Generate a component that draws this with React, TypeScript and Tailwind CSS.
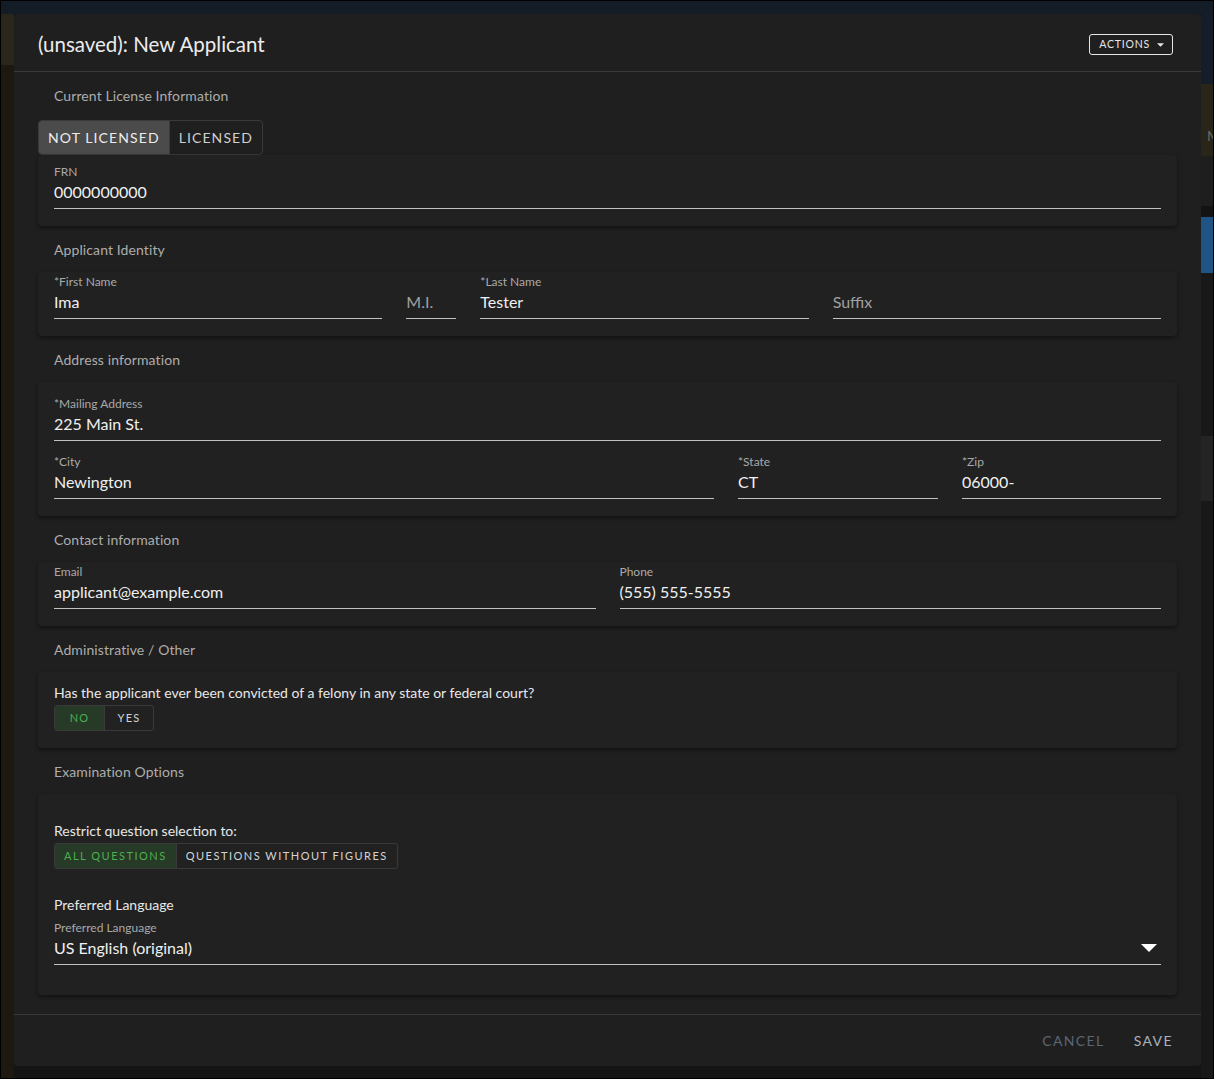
import React from "react";

function Field({
  label,
  value,
  placeholder,
  className = "",
}: {
  label?: string;
  value?: string;
  placeholder?: string;
  className?: string;
}) {
  return (
    <div className={className}>
      <div className="h-[14px] text-[12px] leading-[14px] text-[#a9a9a9] whitespace-nowrap">{label ?? ""}</div>
      <div className="pt-[4px] pb-[7px] border-b border-[#c2c2c2] text-[16px] leading-[18px] text-[#f0f0f0] whitespace-nowrap">
        {value ? value : <span className="text-[#a0a0a0]">{placeholder}</span>}
      </div>
    </div>
  );
}

function Heading({ children }: { children: React.ReactNode }) {
  return (
    <div className="px-4 pt-[15px] pb-[13px] text-[14px] tracking-[0.1px] leading-[18px] text-[#adadad]">{children}</div>
  );
}

function Card({ className = "", children }: { className?: string; children: React.ReactNode }) {
  return (
    <div className={"bg-[#212121] rounded-[4px] shadow-[0_2px_4px_rgba(0,0,0,0.45)] px-4 " + className}>
      {children}
    </div>
  );
}

function Caret({ className = "" }: { className?: string }) {
  return (
    <svg viewBox="0 0 10 5" className={className} fill="currentColor">
      <path d="M0 0 L10 0 L5 5 Z" />
    </svg>
  );
}

export default function App() {
  return (
    <div className="relative w-[1214px] h-[1079px] border border-black overflow-hidden flex flex-col font-['Lato',sans-serif] bg-[#161616]">
      {/* application behind the dialog */}
      <div className="h-[13px] bg-[#131c27] shrink-0" />
      <div className="flex flex-1">
        <div className="w-[13px] flex flex-col">
          <div className="h-[51px] bg-[#2b261c]" />
          <div className="flex-1 bg-[#1d1910]" />
        </div>
        <div className="flex-1 bg-[#141414]" />
        <div className="w-[12px] flex flex-col">
          <div className="h-[70px] bg-[#141d29]" />
          <div className="h-[72px] bg-[#2a2519] pt-[45px] pl-[6px] text-[14px] leading-[14px] text-[#6a6a6a] overflow-hidden whitespace-nowrap">M</div>
          <div className="h-[50px] bg-[#1e1e1e]" />
          <div className="h-[11px] bg-[#131313]" />
          <div className="h-[56px] bg-[#1f5585]" />
          <div className="h-[163px] bg-[#181818]" />
          <div className="h-[65px] bg-[#242424]" />
          <div className="flex-1 bg-[#181818]" />
        </div>
      </div>

      {/* dialog */}
      <div className="absolute left-[13px] top-[13px] w-[1187px] h-[1052px] bg-[#1f1f1f] rounded-[4px] flex flex-col">
        <div className="h-[58px] shrink-0 border-b border-[#3a3a3a] flex items-center justify-between pl-6 pr-7">
          <div className="pt-[2px] text-[20.5px] leading-[24px] text-[#ececec]">(unsaved): New Applicant</div>
          <button className="mt-[4px] h-[21px] pl-[9px] pr-[8px] flex items-center gap-[7px] border border-[#e6e6e6] rounded-[3px] text-[10.5px] tracking-[0.8px] text-[#e6e6e6]">
            ACTIONS
            <Caret className="w-[7px] h-[4px]" />
          </button>
        </div>

        <div className="flex-1 px-6 pb-[18px] flex flex-col">
          {/* license */}
          <div className="px-4 pt-[15px] pb-[15px] text-[14px] tracking-[0.1px] leading-[18px] text-[#adadad]">Current License Information</div>
          <div className="flex">
            <div className="flex h-[35px] border border-[#3a3a3a] rounded-[4px] overflow-hidden text-[14px] tracking-[1.1px]">
              <div className="px-[9px] flex items-center bg-[#4b4b4b] text-[#ececec]">NOT LICENSED</div>
              <div className="px-[9px] flex items-center border-l border-[#3a3a3a] text-[#cfcfcf]">LICENSED</div>
            </div>
          </div>
          <Card className="pt-[10px] pb-[17px]">
            <Field label="FRN" value="0000000000" />
          </Card>

          {/* identity */}
          <Heading>Applicant Identity</Heading>
          <Card className="pt-[3px] pb-[17px] flex gap-6">
            <Field className="flex-1" label="*First Name" value="Ima" />
            <Field className="w-[50px]" placeholder="M.I." />
            <Field className="flex-1" label="*Last Name" value="Tester" />
            <Field className="flex-1" placeholder="Suffix" />
          </Card>

          {/* address */}
          <Heading>Address information</Heading>
          <Card className="pt-[15px] pb-[17px] flex flex-col gap-[14px]">
            <Field label="*Mailing Address" value="225 Main St." />
            <div className="flex gap-6">
              <Field className="w-[660px]" label="*City" value="Newington" />
              <Field className="w-[200px]" label="*State" value="CT" />
              <Field className="flex-1" label="*Zip" value="06000-" />
            </div>
          </Card>

          {/* contact */}
          <Heading>Contact information</Heading>
          <Card className="pt-[3px] pb-[17px] flex gap-6">
            <Field className="flex-1" label="Email" value="applicant@example.com" />
            <Field className="flex-1" label="Phone" value="(555) 555-5555" />
          </Card>

          {/* administrative */}
          <Heading>Administrative / Other</Heading>
          <Card className="pt-[12px] pb-[17px]">
            <div className="text-[14px] leading-[18px] text-[#e8e8e8]">
              Has the applicant ever been convicted of a felony in any state or federal court?
            </div>
            <div className="mt-[3px] flex">
              <div className="flex h-[26px] border border-[#3a3a3a] rounded-[3px] overflow-hidden text-[11px] tracking-[1.2px]">
                <div className="w-[49px] flex items-center justify-center bg-[#273927] text-[#4caf50]">NO</div>
                <div className="w-[49px] flex items-center justify-center border-l border-[#3a3a3a] text-[#d4d4d4]">YES</div>
              </div>
            </div>
          </Card>

          {/* exam */}
          <Heading>Examination Options</Heading>
          <Card className="pt-[28px] pb-[30px]">
            <div className="text-[14px] leading-[18px] text-[#e8e8e8]">Restrict question selection to:</div>
            <div className="mt-[3px] flex">
              <div className="flex h-[26px] border border-[#3a3a3a] rounded-[3px] overflow-hidden text-[11px] tracking-[1.5px]">
                <div className="px-[9px] flex items-center bg-[#273927] text-[#4caf50]">ALL QUESTIONS</div>
                <div className="px-[9px] flex items-center border-l border-[#3a3a3a] text-[#d4d4d4]">QUESTIONS WITHOUT FIGURES</div>
              </div>
            </div>
            <div className="mt-[27px] text-[14px] leading-[18px] text-[#e8e8e8]">Preferred Language</div>
            <div className="mt-[7px]">
              <div className="h-[14px] text-[12px] leading-[14px] text-[#a9a9a9]">Preferred Language</div>
              <div className="pt-[4px] pb-[7px] border-b border-[#c2c2c2] text-[16px] leading-[18px] text-[#f0f0f0] flex items-center justify-between">
                <span>US English (original)</span>
                <Caret className="w-[16px] h-[8px] mr-[4px] text-white" />
              </div>
            </div>
          </Card>
        </div>

        <div className="h-[52px] shrink-0 border-t border-[#3a3a3a] flex items-center justify-end pr-7 gap-[29px] text-[14px] tracking-[1.4px]">
          <span className="text-[#5b6675]">CANCEL</span>
          <span className="text-[#aab2bd]">SAVE</span>
        </div>
      </div>
    </div>
  );
}
